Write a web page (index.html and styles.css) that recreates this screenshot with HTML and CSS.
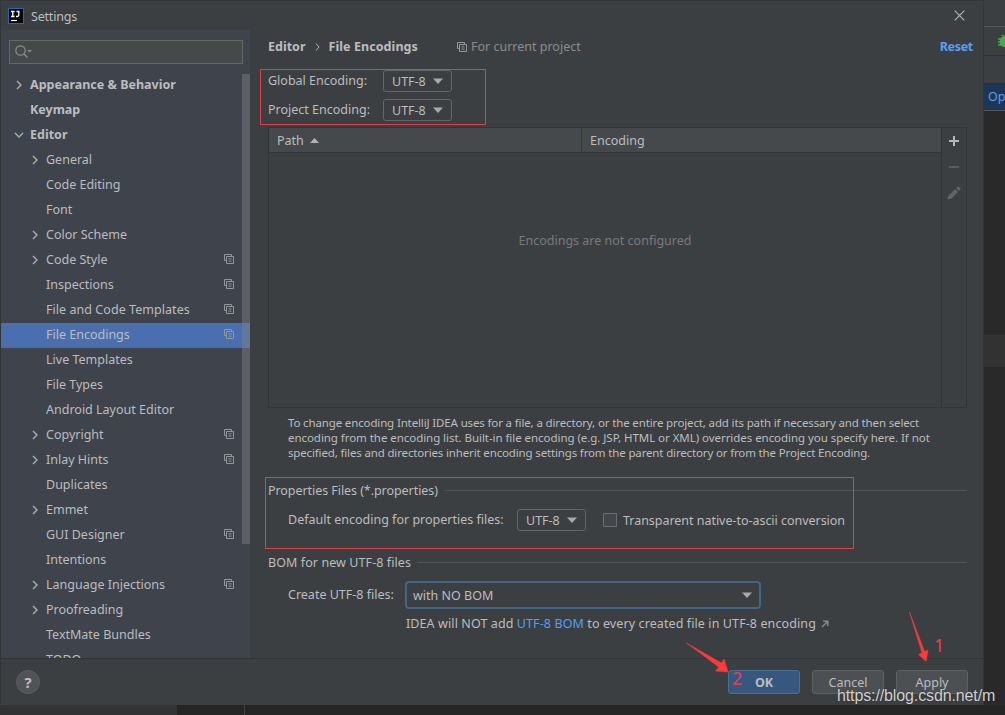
FILE: index.html
```html
<!DOCTYPE html>
<html lang="en">

<head>
    <meta charset="UTF-8">
    <meta name="viewport" content="width=device-width, initial-scale=1.0">
    <title>Settings</title>
    <link rel="stylesheet" href="styles.css">
</head>

<body>
    <!-- shared icons -->
    <svg class="sprite" width="0" height="0">
        <symbol id="right" viewBox="0 0 10 10"><path d="M3 1l4 4-4 4" fill="none" stroke="#adb0b3" stroke-width="1.4"/></symbol>
        <symbol id="down" viewBox="0 0 10 10"><path d="M1 3l4 4 4-4" fill="none" stroke="#adb0b3" stroke-width="1.4"/></symbol>
        <symbol id="copy" viewBox="0 0 10 10"><path d="M2.5 6.5h-2v-6h7v2M2.5 2.5h7v7h-7zM4.5 4.9h3M4.5 7.1h3" fill="none" stroke="currentColor"/></symbol>
        <symbol id="arrow" viewBox="0 0 10 6"><path d="M0 .5h10L5 6z" fill="#a7aaac"/></symbol>
    </svg>

    <div class="desktop">
        <section class="dialog">
            <header class="titlebar">
                <svg class="logo" width="16" height="16" viewBox="0 0 16 16">
                    <rect x=".5" y=".5" width="15" height="15" fill="#05070d" stroke="#2b62b5"/>
                    <path d="M3 3.5h3.6M4.8 3.5v5M3 8.5h3.6M8.5 3.5h3M10.8 3.5v3.6q0 1.4-1.4 1.4H8" fill="none" stroke="#fff" stroke-width="1.3"/>
                    <path d="M3 12.5h6" stroke="#fff" stroke-width="1.2"/>
                </svg>
                <h1 class="title">Settings</h1>
                <svg class="close" width="11" height="11" viewBox="0 0 11 11"><path d="M.7.7l9.6 9.6M10.3.7L.7 10.3" stroke="#b4b7b9" stroke-width="1.1"/></svg>
            </header>

            <div class="content">
                <aside class="sidebar">
                    <div class="search">
                        <svg width="18" height="14" viewBox="0 0 18 14"><circle cx="5.5" cy="5.5" r="4.7" fill="none" stroke="#8a8d8f" stroke-width="1.2"/><path d="M9 9l3.5 3.5" stroke="#8a8d8f" stroke-width="1.4"/><path d="M12 5h5l-2.5 2.5z" fill="#8a8d8f"/></svg>
                    </div>
                    <div class="tree_wrap">
                        <ul class="tree">
                            <li class="top"><svg class="chevron"><use href="#right"/></svg><span>Appearance &amp; Behavior</span></li>
                            <li class="top"><i class="chevron"></i><span>Keymap</span></li>
                            <li class="top"><svg class="chevron"><use href="#down"/></svg><span>Editor</span></li>
                            <li><svg class="chevron"><use href="#right"/></svg><span>General</span></li>
                            <li><i class="chevron"></i><span>Code Editing</span></li>
                            <li><i class="chevron"></i><span>Font</span></li>
                            <li><svg class="chevron"><use href="#right"/></svg><span>Color Scheme</span></li>
                            <li><svg class="chevron"><use href="#right"/></svg><span>Code Style</span><svg class="copy"><use href="#copy"/></svg></li>
                            <li><i class="chevron"></i><span>Inspections</span><svg class="copy"><use href="#copy"/></svg></li>
                            <li><i class="chevron"></i><span class="templates">File and Code Templates</span><svg class="copy"><use href="#copy"/></svg></li>
                            <li class="selected"><i class="chevron"></i><span>File Encodings</span><svg class="copy"><use href="#copy"/></svg></li>
                            <li><i class="chevron"></i><span>Live Templates</span></li>
                            <li><i class="chevron"></i><span>File Types</span></li>
                            <li><i class="chevron"></i><span>Android Layout Editor</span></li>
                            <li><svg class="chevron"><use href="#right"/></svg><span>Copyright</span><svg class="copy"><use href="#copy"/></svg></li>
                            <li><svg class="chevron"><use href="#right"/></svg><span>Inlay Hints</span><svg class="copy"><use href="#copy"/></svg></li>
                            <li><i class="chevron"></i><span>Duplicates</span></li>
                            <li><svg class="chevron"><use href="#right"/></svg><span>Emmet</span></li>
                            <li><i class="chevron"></i><span>GUI Designer</span><svg class="copy"><use href="#copy"/></svg></li>
                            <li><i class="chevron"></i><span>Intentions</span></li>
                            <li><svg class="chevron"><use href="#right"/></svg><span>Language Injections</span><svg class="copy"><use href="#copy"/></svg></li>
                            <li><svg class="chevron"><use href="#right"/></svg><span>Proofreading</span></li>
                            <li><i class="chevron"></i><span>TextMate Bundles</span></li>
                            <li><i class="chevron"></i><span>TODO</span></li>
                        </ul>
                        <div class="scrollbar"></div>
                    </div>
                </aside>

                <main class="main">
                    <div class="breadcrumb">
                        <b>Editor</b>
                        <svg class="crumb_arrow" width="5" height="8" viewBox="0 0 5 8"><path d="M1 .5L4 4 1 7.5" fill="none" stroke="#b0b3b5"/></svg>
                        <b class="crumb_page">File Encodings</b>
                        <svg class="copy"><use href="#copy"/></svg>
                        <span class="scope">For current project</span>
                        <a class="reset">Reset</a>
                    </div>

                    <div class="encodings">
                        <label>Global Encoding:</label>
                        <div class="select">UTF-8 <svg><use href="#arrow"/></svg></div>
                        <label>Project Encoding:</label>
                        <div class="select">UTF-8 <svg><use href="#arrow"/></svg></div>
                    </div>

                    <div class="table">
                        <div class="table_left">
                            <div class="table_head">
                                <div class="col_path">Path <svg width="9" height="5" viewBox="0 0 9 5"><path d="M0 5l4.5-5L9 5z" fill="#b0b3b5"/></svg></div>
                                <div class="col_encoding">Encoding</div>
                            </div>
                            <div class="table_empty">Encodings are not configured</div>
                        </div>
                        <div class="table_tools">
                            <svg width="14" height="14" viewBox="0 0 14 14"><path d="M7 2v10M2 7h10" stroke="#b4b7b9" stroke-width="2"/></svg>
                            <svg width="14" height="14" viewBox="0 0 14 14"><path d="M2 7h10" stroke="#5a5d60" stroke-width="2"/></svg>
                            <svg width="14" height="14" viewBox="0 0 14 14"><path d="M.5 13.5l.8-3.6 6.800-6.800 2.800 2.800-6.800 6.800zM9 2.200L10.600.8q.6-.5 1.200 0l1.500 1.500q.5.6 0 1.200L11.800 5z" fill="#626567"/></svg>
                        </div>
                    </div>

                    <p class="hint">
                        <span class="hint1">To change encoding IntelliJ IDEA uses for a file, a directory, or the entire project, add its path if necessary and then select</span>
                        <span class="hint2">encoding from the encoding list. Built-in file encoding (e.g. JSP, HTML or XML) overrides encoding you specify here. If not</span>
                        <span class="hint3">specified, files and directories inherit encoding settings from the parent directory or from the Project Encoding.</span>
                    </p>

                    <h2 class="group group_props"><span>Properties Files (*.properties)</span></h2>
                    <div class="props_row">
                        <label>Default encoding for properties files:</label>
                        <div class="select">UTF-8 <svg><use href="#arrow"/></svg></div>
                        <div class="checkbox"></div>
                        <span class="native">Transparent native-to-ascii conversion</span>
                    </div>

                    <h2 class="group group_bom"><span>BOM for new UTF-8 files</span></h2>
                    <div class="bom_row">
                        <label>Create UTF-8 files:</label>
                        <div class="select_focus">with NO BOM <svg><use href="#arrow"/></svg></div>
                    </div>
                    <div class="bom_note">
                        <span>IDEA will NOT add <a>UTF-8 BOM</a> to every created file in UTF-8 encoding</span>
                        <svg width="8" height="8" viewBox="0 0 8 8"><path d="M1 7l5.500-5.500M2 1.200h4.800V6" fill="none" stroke="#8d9092" stroke-width="1.3"/></svg>
                    </div>
                </main>
            </div>

            <footer class="footer">
                <div class="help">?</div>
                <button class="button primary">OK</button>
                <button class="button">Cancel</button>
                <button class="button">Apply</button>
            </footer>
        </section>

        <!-- editor window behind the dialog -->
        <aside class="behind">
            <div class="behind_menu"></div>
            <div class="behind_toolbar">
                <svg width="7" height="14" viewBox="0 0 7 14"><path d="M7 3Q2.500 3 2.500 7.500T7 12.500zM0 5h4M0 8h4M0 11h4M4 1l3 3" fill="#4ba551" stroke="#4ba551" stroke-width="1.6"/></svg>
            </div>
            <div class="behind_tabs"></div>
            <div class="behind_banner">Op</div>
            <div class="behind_editor"></div>
            <div class="behind_line"></div>
        </aside>
    </div>
    <div class="bottom"><div class="bottom_left"></div><div class="bottom_gutter"></div></div>

    <!-- annotations -->
    <div class="mark mark_encodings"></div>
    <div class="mark mark_props"></div>
    <svg class="arrows" width="1005" height="715" viewBox="0 0 1005 715">
        <path d="M686.500 643L721.500 663l2.500-4L728 672l-12.500-1 3.200-4zM909.500 612L924.500 651.500l3.500-1.500-1.800 11.500-7.700-7 3.500-1.500z" fill="#fb3b3b" stroke="#fb3b3b" stroke-width=".5"/>
    </svg>
    <span class="step step1">1</span>
    <span class="step step2">2</span>
    <span class="watermark">https://blog.csdn.net/m</span>
</body>

</html>
```

FILE: styles.css
```css
* {
    box-sizing: border-box;
}

body {
    position: relative;
    margin: 0;
    width: 1005px;
    height: 715px;
    overflow: hidden;
    background: #292929;
    color: #bbbdbf;
    font-family: "Noto Sans", "Open Sans", sans-serif;
    font-size: 12.5px;
    line-height: 18px;
    white-space: nowrap;
}

svg {
    display: block;
    flex: none;
}

.sprite {
    position: absolute;
}

.desktop {
    display: flex;
    height: 705px;
}

.dialog {
    display: flex;
    flex-direction: column;
    width: 984px;
    background: #3c3f41;
    border: 1px solid #323537;
    border-bottom: none;
}

.titlebar {
    display: flex;
    align-items: center;
    height: 29px;
    padding: 0 18px 0 7px;
}

.title {
    margin: 0 auto 0 7px;
    padding-top: 2px;
    font-size: 12.5px;
    font-weight: normal;
    letter-spacing: -0.2px;
}

.content {
    display: flex;
    height: 629px;
    border-bottom: 1px solid #323435;
}

/* sidebar */
.sidebar {
    width: 249px;
    background: #3e434c;
    overflow: hidden;
}

.search {
    display: flex;
    align-items: center;
    width: 234px;
    height: 24px;
    margin: 10px 0 0 8px;
    padding-left: 5px;
    background: #45494a;
    border: 1px solid #646668;
}

.tree_wrap {
    position: relative;
    margin-top: 9px;
}

.tree {
    margin: 0;
    padding: 0;
    list-style: none;
}

.tree li {
    display: flex;
    align-items: center;
    height: 25px;
    padding: 0 16px 2px 29px;
}

.tree .top {
    padding-left: 13px;
    font-weight: bold;
}

.tree .templates {
    letter-spacing: 0.05px;
}

.chevron {
    width: 10px;
    height: 10px;
    margin-right: 6px;
}

.copy {
    width: 10px;
    height: 10px;
    margin-left: auto;
    color: #92979d;
}

.tree .copy {
    margin-bottom: 1px;
}

.tree .selected {
    background: #4b6eaf;
}

.scrollbar {
    position: absolute;
    top: 1px;
    right: 0;
    width: 8px;
    height: 470px;
    background: rgba(128, 130, 132, 0.45);
}

/* right side */
.main {
    flex: 1;
    padding: 8px 16px 0 18px;
}

.breadcrumb {
    display: flex;
    align-items: center;
    height: 18px;
}

.crumb_arrow {
    margin: 0 8px 0 10px;
}

.crumb_page {
    letter-spacing: 0.08px;
}

.breadcrumb .copy {
    margin-left: 39px;
}

.scope {
    margin-left: 4px;
    color: #8a8c8e;
}

.reset {
    margin-left: auto;
    margin-right: -6px;
    color: #589df6;
    font-weight: bold;
    letter-spacing: -0.3px;
}

.encodings {
    display: grid;
    grid-template-columns: 115px 69px;
    grid-auto-rows: 22px;
    row-gap: 7px;
    margin-top: 14px;
}

.encodings label {
    padding-top: 2px;
}

.select {
    display: flex;
    align-items: center;
    justify-content: space-between;
    width: 69px;
    height: 22px;
    padding: 1px 8px 0 8px;
    border: 1px solid #646668;
    border-radius: 3px;
}

.select svg,
.select_focus svg {
    width: 10px;
    height: 6px;
    margin-bottom: 1px;
}

.table {
    display: flex;
    width: 699px;
    height: 281px;
    margin-top: 6px;
    border: 1px solid #323435;
}

.table_left {
    width: 673px;
    border-right: 1px solid #323435;
}

.table_head {
    display: flex;
    height: 25px;
    line-height: 25px;
    background: #45494b;
    border-bottom: 1px solid #323435;
}

.col_path {
    display: flex;
    align-items: center;
    gap: 6px;
    width: 313px;
    padding-left: 8px;
    border-right: 1px solid #36393b;
}

.col_encoding {
    padding-left: 8px;
}

.table_empty {
    padding-top: 79px;
    color: #777a7c;
    text-align: center;
}

.table_tools {
    display: flex;
    flex-direction: column;
    gap: 12px;
    padding: 6px 0 0 5px;
}

.hint {
    margin: 7px 0 0 20px;
    font-size: 11.5px;
    line-height: 15px;
}

.hint span {
    display: block;
}

.hint1 {
    letter-spacing: -0.14px;
}

.hint2 {
    letter-spacing: -0.05px;
}

.hint3 {
    letter-spacing: -0.15px;
}

.group {
    display: flex;
    align-items: center;
    height: 18px;
    margin: 0;
    font-size: 12.5px;
    font-weight: normal;
}

.group span {
    padding-top: 1px;
}

.group::after {
    content: "";
    flex: 1;
    height: 1px;
    margin-left: 6px;
    background: #515456;
}

.group_props {
    margin-top: 21px;
}

.group_props span {
    letter-spacing: -0.06px;
}

.props_row {
    display: flex;
    align-items: center;
    height: 22px;
    margin: 10px 0 0 20px;
}

.props_row label {
    width: 229px;
}

.checkbox {
    width: 14px;
    height: 14px;
    margin: 0 6px 0 17px;
    background: #43474a;
    border: 1px solid #6b6e70;
}

.native {
    padding-top: 2px;
    letter-spacing: -0.03px;
}

.group_bom {
    margin-top: 22px;
}

.group_bom span {
    letter-spacing: 0.08px;
}

.bom_row {
    display: flex;
    align-items: center;
    height: 28px;
    margin: 10px 0 0 20px;
}

.bom_row label {
    width: 117px;
}

.select_focus {
    display: flex;
    align-items: center;
    justify-content: space-between;
    width: 356px;
    height: 28px;
    padding: 1px 7px 0 6px;
    border: 2px solid #42658a;
    border-radius: 4px;
}

.bom_note {
    display: flex;
    align-items: center;
    gap: 5px;
    margin: 6px 0 0 138px;
    letter-spacing: 0.1px;
}

.bom_note a {
    color: #589df6;
}

/* buttons */
.footer {
    display: flex;
    align-items: center;
    flex: 1;
    gap: 12px;
    padding: 0 15px;
}

.help {
    width: 24px;
    height: 24px;
    margin-right: auto;
    background: #515456;
    border: 1px solid #5c5f61;
    border-radius: 50%;
    font-size: 15px;
    font-weight: bold;
    line-height: 22px;
    text-align: center;
}

.button {
    width: 72px;
    height: 24px;
    padding: 1px 0 0;
    background: #4c5052;
    border: 1px solid #5e6062;
    border-radius: 3px;
    color: #bbbdbf;
    font-family: inherit;
    font-size: 12.5px;
    line-height: 20px;
}

.primary {
    background: #365880;
    border-color: #4c708c;
    font-weight: bold;
}

/* window behind */
.behind {
    display: flex;
    flex-direction: column;
    width: 21px;
    overflow: hidden;
}

.behind_menu {
    height: 27px;
    background: #3c3f41;
    border-bottom: 1px solid #555759;
}

.behind_toolbar {
    height: 29px;
    padding: 7px 0 0 14px;
    background: #3c3f41;
    border-bottom: 1px solid #2e3032;
}

.behind_tabs {
    height: 27px;
    background: #3c3f41;
}

.behind_banner {
    height: 28px;
    padding-left: 4px;
    background: #1d3657;
    border-bottom: 1px solid #55585a;
    color: #589df6;
    line-height: 28px;
}

.behind_editor {
    height: 224px;
}

.behind_line {
    height: 32px;
    background: #323232;
}

.bottom {
    display: flex;
    height: 10px;
    background: #252525;
}

.bottom_left {
    width: 177px;
    background: #313335;
}

.bottom_gutter {
    width: 68px;
    border-right: 1px solid #444;
}

/* annotations */
.mark {
    position: absolute;
    border: 1px solid #d9414c;
}

.mark_encodings {
    left: 260px;
    top: 69px;
    width: 226px;
    height: 56px;
}

.mark_props {
    left: 265px;
    top: 477px;
    width: 589px;
    height: 72px;
}

.arrows {
    position: absolute;
    left: 0;
    top: 0;
}

.step {
    position: absolute;
    color: #ee3c4c;
    font-size: 18px;
}

.step1 {
    left: 934px;
    top: 636px;
}

.step2 {
    left: 732px;
    top: 669px;
}

.watermark {
    position: absolute;
    left: 837px;
    top: 687px;
    color: #d2d2d2;
    font-family: "Liberation Sans", Arial, sans-serif;
    font-size: 16px;
    letter-spacing: -0.12px;
    text-shadow: 0 0 1px #222;
}
```
